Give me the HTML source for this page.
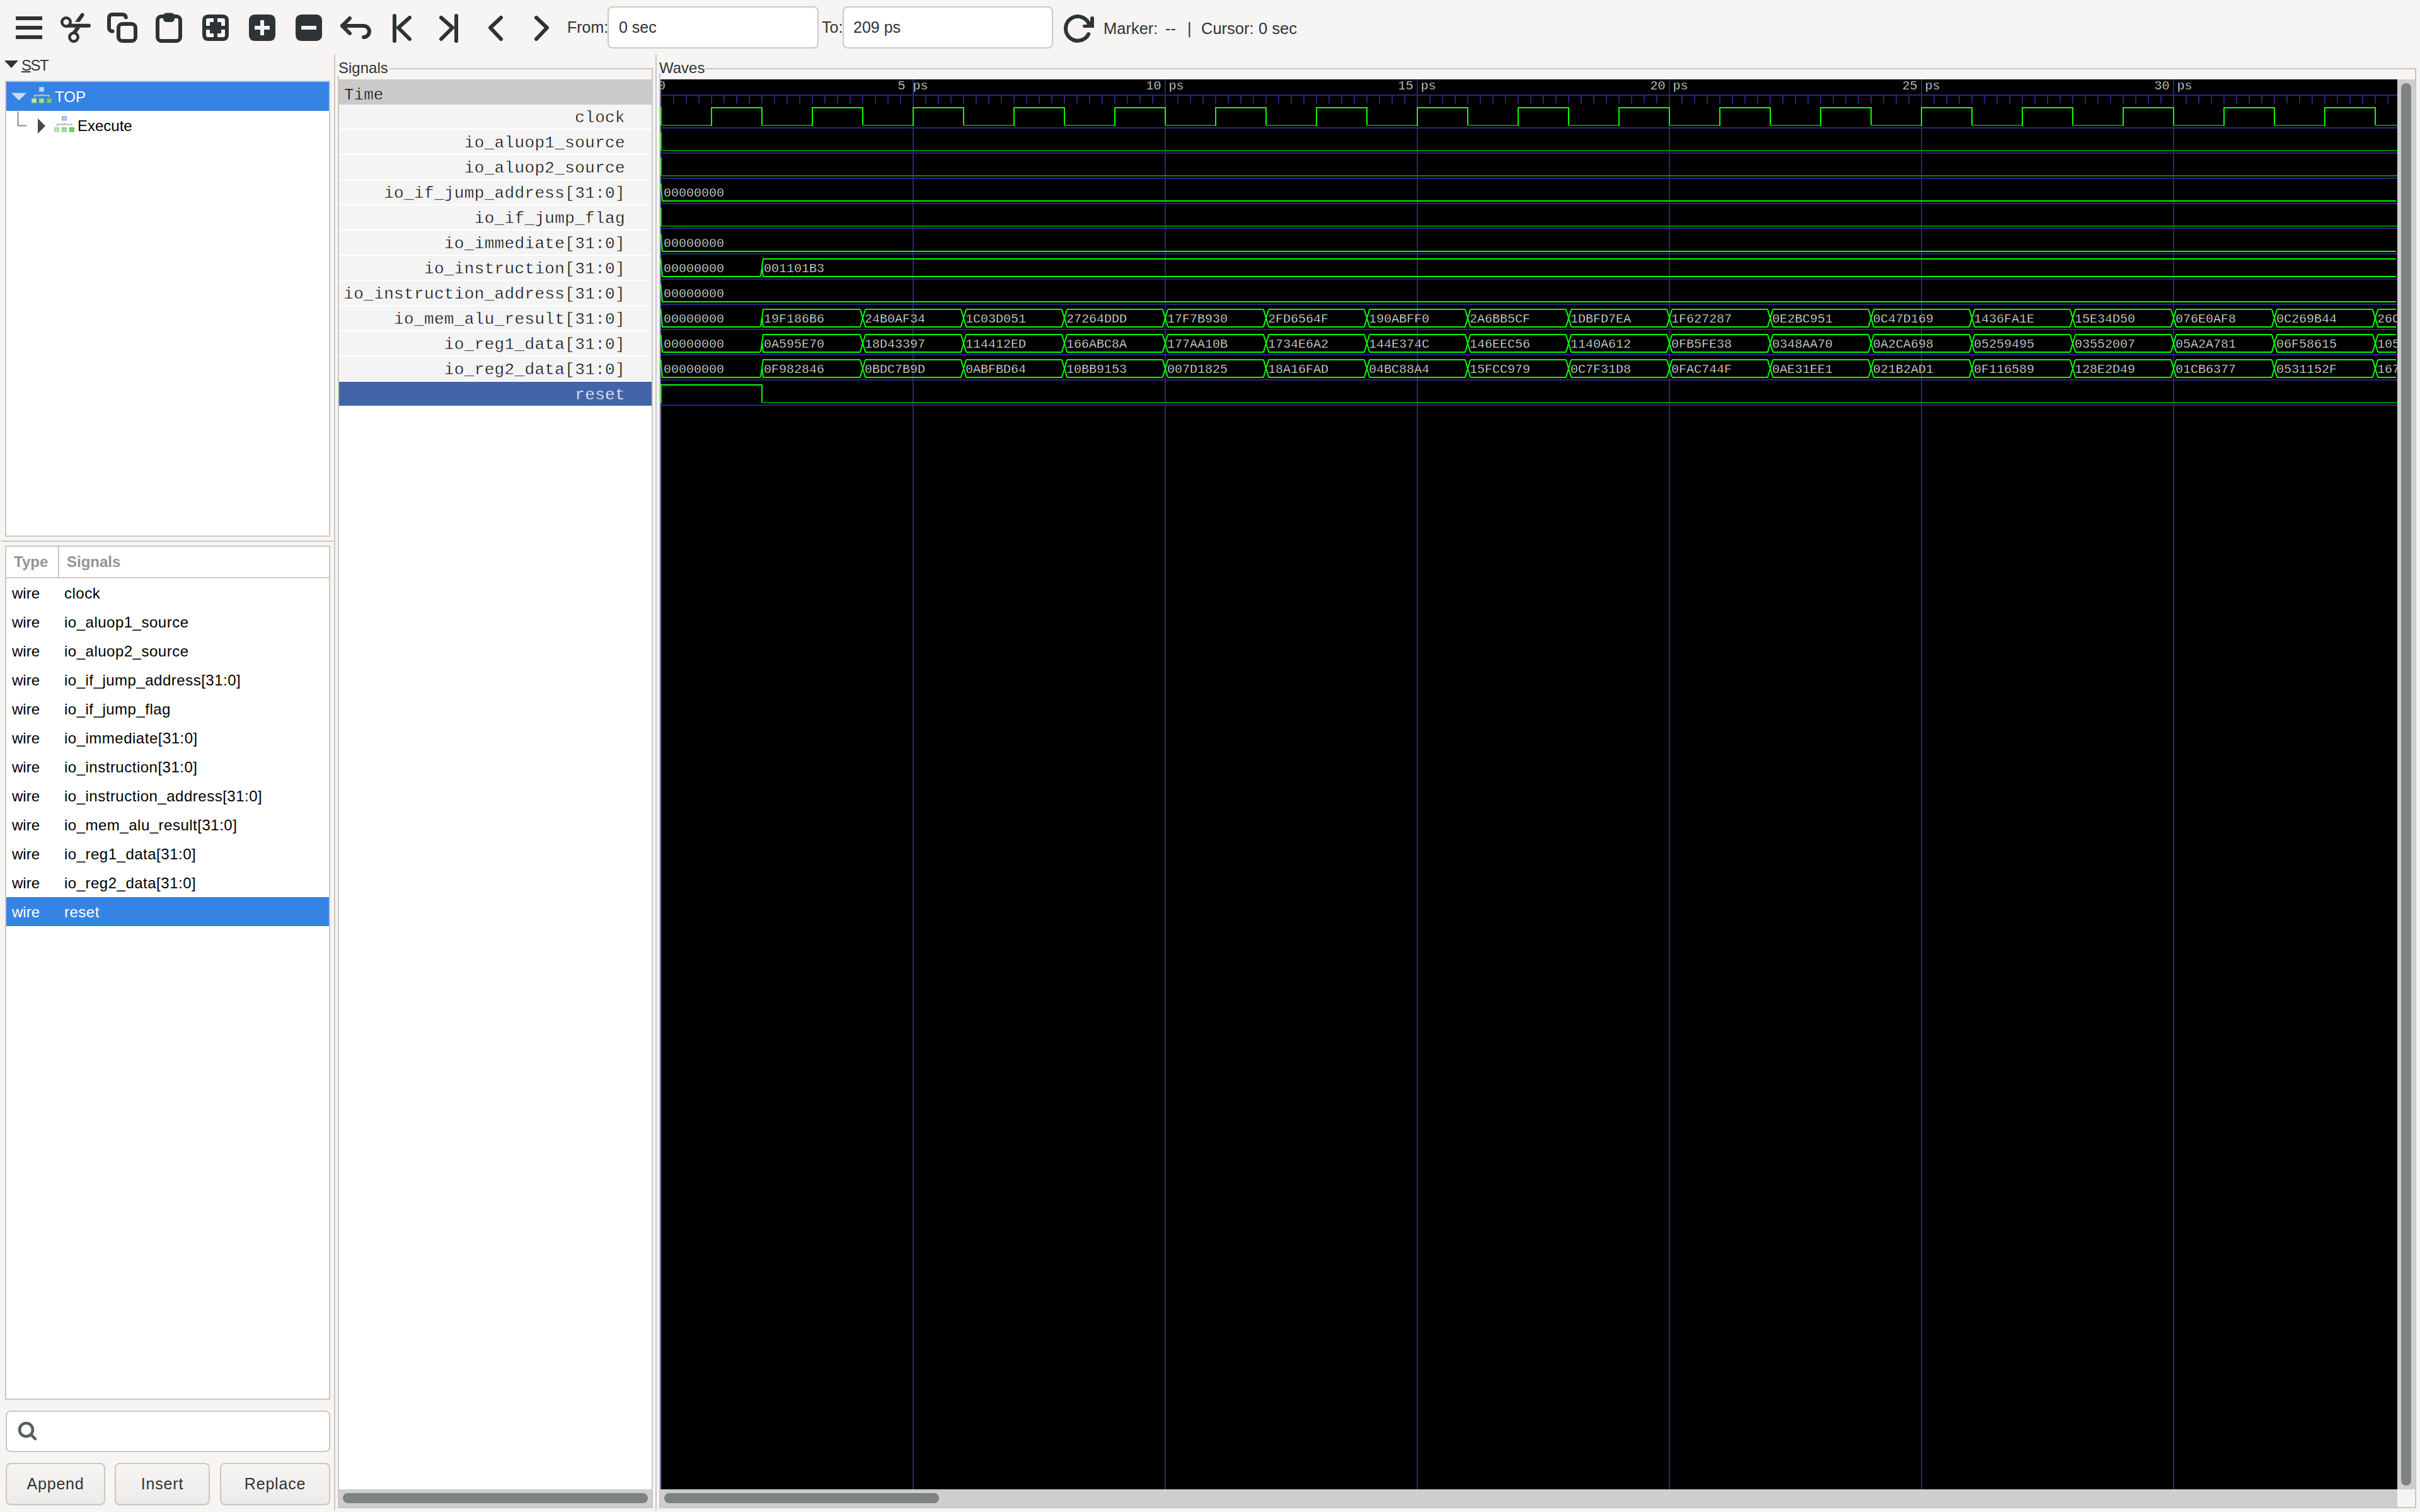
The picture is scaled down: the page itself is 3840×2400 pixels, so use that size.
<!DOCTYPE html><html><head><meta charset="utf-8"><style>
html,body{margin:0;padding:0;}
body{width:3840px;height:2400px;position:relative;overflow:hidden;background:#f6f5f4;font-family:"Liberation Sans", sans-serif;color:#2e3436;}
.abs{position:absolute;}
.t{position:absolute;white-space:pre;line-height:1;}
svg{position:absolute;overflow:visible;}

</style></head><body>
<svg class="abs" style="left:22px;top:20px" width="48" height="48" viewBox="0 0 48 48"><g fill="#2e3436"><rect x="3" y="6" width="42" height="6"/><rect x="3" y="21" width="42" height="6"/><rect x="3" y="36" width="42" height="6"/></g></svg>
<svg class="abs" style="left:96px;top:20px" width="48" height="48" viewBox="0 0 48 48"><g fill="none" stroke="#2e3436" stroke-width="4.5"><circle cx="9" cy="15" r="6.7"/><circle cx="21" cy="39" r="6.7"/></g><path d="M14 17.8 H45 A3 3 0 0 1 45 23.8 H9 Z" fill="#2e3436"/><path d="M17 33.5 L24 23.5 L31.5 23.5 L24.5 33.5 Z" fill="#2e3436"/><path d="M23 14.7 L32 2.2 A3 3 0 0 1 37.2 5.2 L30.5 14.7 Z" fill="#2e3436"/></svg>
<svg class="abs" style="left:170px;top:20px" width="48" height="48" viewBox="0 0 48 48"><g fill="none" stroke="#2e3436" stroke-width="6" stroke-linecap="round" stroke-linejoin="round"><path d="M29.8 7.5 A5 5 0 0 0 24.8 3 H8 A5 5 0 0 0 3 8 V24.6 A5 5 0 0 0 8.5 29.6"/><rect x="18" y="18" width="27" height="27" rx="6"/></g></svg>
<svg class="abs" style="left:244px;top:20px" width="48" height="48" viewBox="0 0 48 48"><g fill="none" stroke="#2e3436" stroke-width="6" stroke-linecap="round" stroke-linejoin="round"><rect x="6" y="6" width="36" height="39" rx="6"/></g><rect x="15" y="0.5" width="18" height="14.5" rx="5" fill="#2e3436"/></svg>
<svg class="abs" style="left:318px;top:20px" width="48" height="48" viewBox="0 0 48 48"><path fill="#2e3436" fill-rule="evenodd" d="M13 3 H35 Q45 3 45 13 V35 Q45 45 35 45 H13 Q3 45 3 35 V13 Q3 3 13 3 Z M12 9 Q9 9 9 12 V21 H15 V15 H21 V9 Z M27 9 V15 H33 V21 H39 V12 Q39 9 36 9 Z M9 27 V36 Q9 39 12 39 H21 V33 H15 V27 Z M33 27 V33 H27 V39 H36 Q39 39 39 36 V27 Z"/></svg>
<svg class="abs" style="left:392px;top:20px" width="48" height="48" viewBox="0 0 48 48"><path fill="#2e3436" fill-rule="evenodd" d="M13 3 H35 Q45 3 45 13 V35 Q45 45 35 45 H13 Q3 45 3 35 V13 Q3 3 13 3 Z M21 12 V21 H12 V27 H21 V36 H27 V27 H36 V21 H27 V12 Z"/></svg>
<svg class="abs" style="left:466px;top:20px" width="48" height="48" viewBox="0 0 48 48"><path fill="#2e3436" fill-rule="evenodd" d="M13 3 H35 Q45 3 45 13 V35 Q45 45 35 45 H13 Q3 45 3 35 V13 Q3 3 13 3 Z M12 21 V27 H36 V21 Z"/></svg>
<svg class="abs" style="left:540px;top:20px" width="48" height="48" viewBox="0 0 48 48"><g fill="none" stroke="#2e3436" stroke-width="6" stroke-linecap="round" stroke-linejoin="round"><path d="M15 9 L3 21 L15 33"/><path d="M3 21 H37 A9 9 0 0 1 37 39"/></g></svg>
<svg class="abs" style="left:614px;top:20px" width="48" height="48" viewBox="0 0 48 48"><g fill="none" stroke="#2e3436" stroke-width="6" stroke-linecap="round" stroke-linejoin="round"><path d="M12 5 V45"/><path d="M36 8 L18 24 L36 42"/></g></svg>
<svg class="abs" style="left:688px;top:20px" width="48" height="48" viewBox="0 0 48 48"><g fill="none" stroke="#2e3436" stroke-width="6" stroke-linecap="round" stroke-linejoin="round"><path d="M36 5 V45"/><path d="M12 8 L30 24 L12 42"/></g></svg>
<svg class="abs" style="left:762px;top:20px" width="48" height="48" viewBox="0 0 48 48"><g fill="none" stroke="#2e3436" stroke-width="6" stroke-linecap="round" stroke-linejoin="round"><path d="M33 8 L16 24 L33 42"/></g></svg>
<svg class="abs" style="left:836px;top:20px" width="48" height="48" viewBox="0 0 48 48"><g fill="none" stroke="#2e3436" stroke-width="6" stroke-linecap="round" stroke-linejoin="round"><path d="M15 8 L32 24 L15 42"/></g></svg>
<svg class="abs" style="left:1686px;top:20px" width="48" height="48" viewBox="0 0 48 48"><g fill="none" stroke="#2e3436" stroke-width="6" stroke-linecap="round" stroke-linejoin="round"><path d="M42.75 20.43 A19.2 19.2 0 1 0 41.31 34.12"/></g><path fill="#2e3436" d="M47 6 Q50 6 50 9 V24 H35 Q32 24 32 21.5 Q32 19 35 19 H44 V9 Q44 6 47 6 Z"/></svg>
<div class="t" style="left:900px;top:31px;font-size:25px;">From:</div>
<div class="abs" style="left:964px;top:10px;width:331px;height:63px;border:2px solid #cdc7c2;border-radius:8px;background:#fff;"></div>
<div class="t" style="left:982px;top:31px;font-size:25px;">0 sec</div>
<div class="t" style="left:1304px;top:31px;font-size:25px;">To:</div>
<div class="abs" style="left:1337px;top:10px;width:330px;height:63px;border:2px solid #cdc7c2;border-radius:8px;background:#fff;"></div>
<div class="t" style="left:1354px;top:31px;font-size:25px;">209 ps</div>
<div class="t" style="left:1751px;top:33px;font-size:25.5px;">Marker:</div>
<div class="t" style="left:1849px;top:33px;font-size:25.5px;">--</div>
<div class="t" style="left:1884px;top:33px;font-size:25.5px;">|</div>
<div class="t" style="left:1906px;top:33px;font-size:25.5px;">Cursor:</div>
<div class="t" style="left:1997px;top:33px;font-size:25.5px;">0 sec</div>
<svg class="abs" style="left:0;top:80px" width="40" height="40"><path d="M7 16 H29 L18 28 Z" fill="#2e3436"/></svg>
<div class="t" style="left:34px;top:92px;font-size:24px;letter-spacing:-1.5px;"><span style="text-decoration:underline;text-underline-offset:1px;">S</span>ST</div>
<div class="abs" style="left:8px;top:128px;width:512px;height:720px;border:2px solid #cdc7c2;background:#fff;"></div>
<div class="abs" style="left:10px;top:130px;width:512px;height:46px;background:#3584e4;"></div>
<svg class="abs" style="left:0;top:130px" width="50" height="46"><path d="M18 17.5 H42 L30 29.5 Z" fill="#c6dcf6"/></svg>
<svg class="abs" style="left:50px;top:138px" width="34" height="28"><rect x="12" y="0" width="8" height="7.5" fill="#b4cff2"/><rect x="14.5" y="2.5" width="3" height="3" fill="#dde6f8"/><path d="M16 11 V13 M5 16 V13.5 H28 V16" stroke="#c9c2b6" stroke-width="2" fill="none"/><rect x="0" y="18" width="8" height="7.6" fill="#a3dc9b"/><rect x="2.5" y="20.5" width="3" height="3" fill="#d4eecf"/><rect x="12" y="18" width="8" height="7.6" fill="#8ed388"/><rect x="14.5" y="20.5" width="3" height="3" fill="#c4e6bf"/><rect x="24" y="18" width="8" height="7.6" fill="#66bd66"/><rect x="26.5" y="20.5" width="3" height="3" fill="#9cd49a"/></svg>
<div class="t" style="left:87px;top:142px;font-size:24px;color:#fff;">TOP</div>
<svg class="abs" style="left:0;top:176px" width="80" height="46"><path d="M28.5 1 V23.5 H42.5" stroke="#8a8a8a" stroke-width="2" fill="none"/><path d="M60 12 L72 24 L60 36 Z" fill="#484848"/></svg>
<svg class="abs" style="left:86px;top:184px" width="34" height="28"><rect x="12" y="0" width="8" height="7.5" fill="#8fbdee"/><rect x="14.5" y="2.5" width="3" height="3" fill="#d6e2f6"/><path d="M16 11 V13 M5 16 V13.5 H28 V16" stroke="#b9b9b9" stroke-width="2" fill="none"/><rect x="0" y="18" width="8" height="7.6" fill="#a3dc9b"/><rect x="2.5" y="20.5" width="3" height="3" fill="#d4eecf"/><rect x="12" y="18" width="8" height="7.6" fill="#8ed388"/><rect x="14.5" y="20.5" width="3" height="3" fill="#c4e6bf"/><rect x="24" y="18" width="8" height="7.6" fill="#66bd66"/><rect x="26.5" y="20.5" width="3" height="3" fill="#9cd49a"/></svg>
<div class="t" style="left:123px;top:188px;font-size:24px;color:#000;">Execute</div>
<div class="abs" style="left:2px;top:858px;width:528px;height:2px;background:#cdc7c2;"></div>
<div class="abs" style="left:8px;top:866px;width:512px;height:1352px;border:2px solid #cdc7c2;background:#fff;"></div>
<div class="abs" style="left:10px;top:916px;width:512px;height:2px;background:#cdc7c2;"></div>
<div class="abs" style="left:92px;top:868px;width:2px;height:48px;background:#cdc7c2;"></div>
<div class="t" style="left:22px;top:880px;font-size:24px;font-weight:bold;color:#929595;">Type</div>
<div class="t" style="left:106px;top:880px;font-size:24px;font-weight:bold;color:#929595;">Signals</div>
<div class="t" style="left:19px;top:930px;font-size:24px;color:#000;">wire</div>
<div class="t" style="left:102px;top:930px;font-size:24px;letter-spacing:0.5px;color:#000;">clock</div>
<div class="t" style="left:19px;top:976px;font-size:24px;color:#000;">wire</div>
<div class="t" style="left:102px;top:976px;font-size:24px;letter-spacing:0.5px;color:#000;">io_aluop1_source</div>
<div class="t" style="left:19px;top:1022px;font-size:24px;color:#000;">wire</div>
<div class="t" style="left:102px;top:1022px;font-size:24px;letter-spacing:0.5px;color:#000;">io_aluop2_source</div>
<div class="t" style="left:19px;top:1068px;font-size:24px;color:#000;">wire</div>
<div class="t" style="left:102px;top:1068px;font-size:24px;letter-spacing:0.5px;color:#000;">io_if_jump_address[31:0]</div>
<div class="t" style="left:19px;top:1114px;font-size:24px;color:#000;">wire</div>
<div class="t" style="left:102px;top:1114px;font-size:24px;letter-spacing:0.5px;color:#000;">io_if_jump_flag</div>
<div class="t" style="left:19px;top:1160px;font-size:24px;color:#000;">wire</div>
<div class="t" style="left:102px;top:1160px;font-size:24px;letter-spacing:0.5px;color:#000;">io_immediate[31:0]</div>
<div class="t" style="left:19px;top:1206px;font-size:24px;color:#000;">wire</div>
<div class="t" style="left:102px;top:1206px;font-size:24px;letter-spacing:0.5px;color:#000;">io_instruction[31:0]</div>
<div class="t" style="left:19px;top:1252px;font-size:24px;color:#000;">wire</div>
<div class="t" style="left:102px;top:1252px;font-size:24px;letter-spacing:0.5px;color:#000;">io_instruction_address[31:0]</div>
<div class="t" style="left:19px;top:1298px;font-size:24px;color:#000;">wire</div>
<div class="t" style="left:102px;top:1298px;font-size:24px;letter-spacing:0.5px;color:#000;">io_mem_alu_result[31:0]</div>
<div class="t" style="left:19px;top:1344px;font-size:24px;color:#000;">wire</div>
<div class="t" style="left:102px;top:1344px;font-size:24px;letter-spacing:0.5px;color:#000;">io_reg1_data[31:0]</div>
<div class="t" style="left:19px;top:1390px;font-size:24px;color:#000;">wire</div>
<div class="t" style="left:102px;top:1390px;font-size:24px;letter-spacing:0.5px;color:#000;">io_reg2_data[31:0]</div>
<div class="abs" style="left:10px;top:1424px;width:512px;height:46px;background:#3584e4;"></div>
<div class="t" style="left:19px;top:1436px;font-size:24px;color:#fff;">wire</div>
<div class="t" style="left:102px;top:1436px;font-size:24px;letter-spacing:0.5px;color:#fff;">reset</div>
<div class="abs" style="left:9px;top:2239px;width:511px;height:62px;border:2px solid #cdc7c2;border-radius:8px;background:#fff;"></div>
<svg class="abs" style="left:20px;top:2250px" width="48" height="48"><circle cx="21.5" cy="19.5" r="10.5" stroke="#555d60" stroke-width="4.5" fill="none"/><path d="M29 27 L36 34" stroke="#555d60" stroke-width="4.5" stroke-linecap="round"/></svg>
<div class="abs" style="left:9px;top:2322px;width:154px;height:63px;border:2px solid #cdc7c2;border-radius:8px;background:linear-gradient(#f6f5f4,#edebe9);box-shadow:0 1px 1px rgba(0,0,0,0.07);"></div>
<div class="t" style="left:9px;top:2343px;width:158px;text-align:center;font-size:25px;letter-spacing:0.8px;">Append</div>
<div class="abs" style="left:182px;top:2322px;width:147px;height:63px;border:2px solid #cdc7c2;border-radius:8px;background:linear-gradient(#f6f5f4,#edebe9);box-shadow:0 1px 1px rgba(0,0,0,0.07);"></div>
<div class="t" style="left:182px;top:2343px;width:151px;text-align:center;font-size:25px;letter-spacing:0.8px;">Insert</div>
<div class="abs" style="left:349px;top:2322px;width:171px;height:63px;border:2px solid #cdc7c2;border-radius:8px;background:linear-gradient(#f6f5f4,#edebe9);box-shadow:0 1px 1px rgba(0,0,0,0.07);"></div>
<div class="t" style="left:349px;top:2343px;width:175px;text-align:center;font-size:25px;letter-spacing:0.8px;">Replace</div>
<div class="abs" style="left:530px;top:86px;width:2px;height:2311px;background:#cdc7c2;"></div>
<div class="t" style="left:537px;top:96px;font-size:24px;">Signals</div>
<div class="abs" style="left:618px;top:108px;width:418px;height:2px;background:#cdc7c2;"></div>
<div class="abs" style="left:1034px;top:108px;width:2px;height:2286px;background:#cdc7c2;"></div>
<div class="abs" style="left:536px;top:120px;width:2px;height:2274px;background:#cdc7c2;"></div>
<div class="abs" style="left:536px;top:2392px;width:500px;height:2px;background:#cdc7c2;"></div>
<div class="abs" style="left:538px;top:126px;width:496px;height:2238px;background:#fff;"></div>
<div class="abs" style="left:538px;top:126px;width:496px;height:40px;background:#cacaca;"></div>
<div class="t" style="left:546px;top:138px;font-size:26px;font-family:'Liberation Mono', monospace;color:#000;-webkit-text-stroke:0.6px #cacaca;">Time</div>
<div class="abs" style="left:538px;top:166px;width:496px;height:38px;background:#f4f4f4;"></div>
<div class="t" style="left:538px;width:454px;text-align:right;top:174px;font-size:26px;letter-spacing:0.35px;font-family:'Liberation Mono', monospace;color:#000;-webkit-text-stroke:0.5px #f4f4f4;">clock</div>
<div class="abs" style="left:538px;top:206px;width:496px;height:38px;background:#f4f4f4;"></div>
<div class="t" style="left:538px;width:454px;text-align:right;top:214px;font-size:26px;letter-spacing:0.35px;font-family:'Liberation Mono', monospace;color:#000;-webkit-text-stroke:0.5px #f4f4f4;">io_aluop1_source</div>
<div class="abs" style="left:538px;top:246px;width:496px;height:38px;background:#f4f4f4;"></div>
<div class="t" style="left:538px;width:454px;text-align:right;top:254px;font-size:26px;letter-spacing:0.35px;font-family:'Liberation Mono', monospace;color:#000;-webkit-text-stroke:0.5px #f4f4f4;">io_aluop2_source</div>
<div class="abs" style="left:538px;top:286px;width:496px;height:38px;background:#f4f4f4;"></div>
<div class="t" style="left:538px;width:454px;text-align:right;top:294px;font-size:26px;letter-spacing:0.35px;font-family:'Liberation Mono', monospace;color:#000;-webkit-text-stroke:0.5px #f4f4f4;">io_if_jump_address[31:0]</div>
<div class="abs" style="left:538px;top:326px;width:496px;height:38px;background:#f4f4f4;"></div>
<div class="t" style="left:538px;width:454px;text-align:right;top:334px;font-size:26px;letter-spacing:0.35px;font-family:'Liberation Mono', monospace;color:#000;-webkit-text-stroke:0.5px #f4f4f4;">io_if_jump_flag</div>
<div class="abs" style="left:538px;top:366px;width:496px;height:38px;background:#f4f4f4;"></div>
<div class="t" style="left:538px;width:454px;text-align:right;top:374px;font-size:26px;letter-spacing:0.35px;font-family:'Liberation Mono', monospace;color:#000;-webkit-text-stroke:0.5px #f4f4f4;">io_immediate[31:0]</div>
<div class="abs" style="left:538px;top:406px;width:496px;height:38px;background:#f4f4f4;"></div>
<div class="t" style="left:538px;width:454px;text-align:right;top:414px;font-size:26px;letter-spacing:0.35px;font-family:'Liberation Mono', monospace;color:#000;-webkit-text-stroke:0.5px #f4f4f4;">io_instruction[31:0]</div>
<div class="abs" style="left:538px;top:446px;width:496px;height:38px;background:#f4f4f4;"></div>
<div class="t" style="left:538px;width:454px;text-align:right;top:454px;font-size:26px;letter-spacing:0.35px;font-family:'Liberation Mono', monospace;color:#000;-webkit-text-stroke:0.5px #f4f4f4;">io_instruction_address[31:0]</div>
<div class="abs" style="left:538px;top:486px;width:496px;height:38px;background:#f4f4f4;"></div>
<div class="t" style="left:538px;width:454px;text-align:right;top:494px;font-size:26px;letter-spacing:0.35px;font-family:'Liberation Mono', monospace;color:#000;-webkit-text-stroke:0.5px #f4f4f4;">io_mem_alu_result[31:0]</div>
<div class="abs" style="left:538px;top:526px;width:496px;height:38px;background:#f4f4f4;"></div>
<div class="t" style="left:538px;width:454px;text-align:right;top:534px;font-size:26px;letter-spacing:0.35px;font-family:'Liberation Mono', monospace;color:#000;-webkit-text-stroke:0.5px #f4f4f4;">io_reg1_data[31:0]</div>
<div class="abs" style="left:538px;top:566px;width:496px;height:38px;background:#f4f4f4;"></div>
<div class="t" style="left:538px;width:454px;text-align:right;top:574px;font-size:26px;letter-spacing:0.35px;font-family:'Liberation Mono', monospace;color:#000;-webkit-text-stroke:0.5px #f4f4f4;">io_reg2_data[31:0]</div>
<div class="abs" style="left:538px;top:606px;width:496px;height:38px;background:#4464aa;"></div>
<div class="t" style="left:538px;width:454px;text-align:right;top:614px;font-size:26px;letter-spacing:0.35px;font-family:'Liberation Mono', monospace;color:#fff;-webkit-text-stroke:0.5px #4464aa;">reset</div>
<div class="abs" style="left:538px;top:2364px;width:496px;height:28px;background:#cecece;"></div>
<div class="abs" style="left:544px;top:2370px;width:484px;height:16px;border-radius:8px;background:#7e8283;"></div>
<div class="abs" style="left:1040px;top:86px;width:2px;height:2311px;background:#cdc7c2;"></div>
<div class="t" style="left:1046px;top:96px;font-size:24px;">Waves</div>
<div class="abs" style="left:1118px;top:108px;width:2716px;height:2px;background:#cdc7c2;"></div>
<div class="abs" style="left:1046px;top:116px;width:2px;height:2278px;background:#cdc7c2;"></div>
<div class="abs" style="left:3832px;top:108px;width:2px;height:2286px;background:#cdc7c2;"></div>
<div class="abs" style="left:1046px;top:2392px;width:2788px;height:2px;background:#cdc7c2;"></div>
<div class="abs" style="left:3804px;top:126px;width:28px;height:2238px;background:#cecece;"></div>
<div class="abs" style="left:3810px;top:132px;width:16px;height:2226px;border-radius:8px;background:#7e8283;"></div>
<div class="abs" style="left:1048px;top:2364px;width:2756px;height:28px;background:#cecece;"></div>
<div class="abs" style="left:1054px;top:2370px;width:436px;height:16px;border-radius:8px;background:#7e8283;"></div>
<div class="abs" style="left:3804px;top:2364px;width:28px;height:28px;background:#f6f5f4;"></div>
<svg style="left:1048px;top:126px" width="2756" height="2238" viewBox="0 0 2756 2238" font-family='"Liberation Mono", monospace'><defs><clipPath id="cc"><rect x="0" y="0" width="2756" height="2238"/></clipPath></defs><g clip-path="url(#cc)" shape-rendering="crispEdges"><rect x="0" y="0" width="2756" height="2238" fill="#000"/><rect x="0" y="24" width="2756" height="2" fill="#262680"/><rect x="0" y="26" width="2" height="12" fill="#262680"/><rect x="20" y="26" width="2" height="12" fill="#262680"/><rect x="40" y="26" width="2" height="12" fill="#262680"/><rect x="60" y="26" width="2" height="12" fill="#262680"/><rect x="80" y="26" width="2" height="12" fill="#262680"/><rect x="100" y="26" width="2" height="12" fill="#262680"/><rect x="120" y="26" width="2" height="12" fill="#262680"/><rect x="140" y="26" width="2" height="12" fill="#262680"/><rect x="160" y="26" width="2" height="12" fill="#262680"/><rect x="180" y="26" width="2" height="12" fill="#262680"/><rect x="200" y="26" width="2" height="12" fill="#262680"/><rect x="220" y="26" width="2" height="12" fill="#262680"/><rect x="240" y="26" width="2" height="12" fill="#262680"/><rect x="260" y="26" width="2" height="12" fill="#262680"/><rect x="280" y="26" width="2" height="12" fill="#262680"/><rect x="300" y="26" width="2" height="12" fill="#262680"/><rect x="320" y="26" width="2" height="12" fill="#262680"/><rect x="340" y="26" width="2" height="12" fill="#262680"/><rect x="360" y="26" width="2" height="12" fill="#262680"/><rect x="380" y="26" width="2" height="12" fill="#262680"/><rect x="400" y="26" width="2" height="12" fill="#262680"/><rect x="420" y="26" width="2" height="12" fill="#262680"/><rect x="440" y="26" width="2" height="12" fill="#262680"/><rect x="460" y="26" width="2" height="12" fill="#262680"/><rect x="480" y="26" width="2" height="12" fill="#262680"/><rect x="500" y="26" width="2" height="12" fill="#262680"/><rect x="520" y="26" width="2" height="12" fill="#262680"/><rect x="540" y="26" width="2" height="12" fill="#262680"/><rect x="560" y="26" width="2" height="12" fill="#262680"/><rect x="580" y="26" width="2" height="12" fill="#262680"/><rect x="600" y="26" width="2" height="12" fill="#262680"/><rect x="620" y="26" width="2" height="12" fill="#262680"/><rect x="640" y="26" width="2" height="12" fill="#262680"/><rect x="660" y="26" width="2" height="12" fill="#262680"/><rect x="680" y="26" width="2" height="12" fill="#262680"/><rect x="700" y="26" width="2" height="12" fill="#262680"/><rect x="720" y="26" width="2" height="12" fill="#262680"/><rect x="740" y="26" width="2" height="12" fill="#262680"/><rect x="760" y="26" width="2" height="12" fill="#262680"/><rect x="780" y="26" width="2" height="12" fill="#262680"/><rect x="800" y="26" width="2" height="12" fill="#262680"/><rect x="820" y="26" width="2" height="12" fill="#262680"/><rect x="840" y="26" width="2" height="12" fill="#262680"/><rect x="860" y="26" width="2" height="12" fill="#262680"/><rect x="880" y="26" width="2" height="12" fill="#262680"/><rect x="900" y="26" width="2" height="12" fill="#262680"/><rect x="920" y="26" width="2" height="12" fill="#262680"/><rect x="940" y="26" width="2" height="12" fill="#262680"/><rect x="960" y="26" width="2" height="12" fill="#262680"/><rect x="980" y="26" width="2" height="12" fill="#262680"/><rect x="1000" y="26" width="2" height="12" fill="#262680"/><rect x="1020" y="26" width="2" height="12" fill="#262680"/><rect x="1040" y="26" width="2" height="12" fill="#262680"/><rect x="1060" y="26" width="2" height="12" fill="#262680"/><rect x="1080" y="26" width="2" height="12" fill="#262680"/><rect x="1100" y="26" width="2" height="12" fill="#262680"/><rect x="1120" y="26" width="2" height="12" fill="#262680"/><rect x="1140" y="26" width="2" height="12" fill="#262680"/><rect x="1160" y="26" width="2" height="12" fill="#262680"/><rect x="1180" y="26" width="2" height="12" fill="#262680"/><rect x="1200" y="26" width="2" height="12" fill="#262680"/><rect x="1220" y="26" width="2" height="12" fill="#262680"/><rect x="1240" y="26" width="2" height="12" fill="#262680"/><rect x="1260" y="26" width="2" height="12" fill="#262680"/><rect x="1280" y="26" width="2" height="12" fill="#262680"/><rect x="1300" y="26" width="2" height="12" fill="#262680"/><rect x="1320" y="26" width="2" height="12" fill="#262680"/><rect x="1340" y="26" width="2" height="12" fill="#262680"/><rect x="1360" y="26" width="2" height="12" fill="#262680"/><rect x="1380" y="26" width="2" height="12" fill="#262680"/><rect x="1400" y="26" width="2" height="12" fill="#262680"/><rect x="1420" y="26" width="2" height="12" fill="#262680"/><rect x="1440" y="26" width="2" height="12" fill="#262680"/><rect x="1460" y="26" width="2" height="12" fill="#262680"/><rect x="1480" y="26" width="2" height="12" fill="#262680"/><rect x="1500" y="26" width="2" height="12" fill="#262680"/><rect x="1520" y="26" width="2" height="12" fill="#262680"/><rect x="1540" y="26" width="2" height="12" fill="#262680"/><rect x="1560" y="26" width="2" height="12" fill="#262680"/><rect x="1580" y="26" width="2" height="12" fill="#262680"/><rect x="1600" y="26" width="2" height="12" fill="#262680"/><rect x="1620" y="26" width="2" height="12" fill="#262680"/><rect x="1640" y="26" width="2" height="12" fill="#262680"/><rect x="1660" y="26" width="2" height="12" fill="#262680"/><rect x="1680" y="26" width="2" height="12" fill="#262680"/><rect x="1700" y="26" width="2" height="12" fill="#262680"/><rect x="1720" y="26" width="2" height="12" fill="#262680"/><rect x="1740" y="26" width="2" height="12" fill="#262680"/><rect x="1760" y="26" width="2" height="12" fill="#262680"/><rect x="1780" y="26" width="2" height="12" fill="#262680"/><rect x="1800" y="26" width="2" height="12" fill="#262680"/><rect x="1820" y="26" width="2" height="12" fill="#262680"/><rect x="1840" y="26" width="2" height="12" fill="#262680"/><rect x="1860" y="26" width="2" height="12" fill="#262680"/><rect x="1880" y="26" width="2" height="12" fill="#262680"/><rect x="1900" y="26" width="2" height="12" fill="#262680"/><rect x="1920" y="26" width="2" height="12" fill="#262680"/><rect x="1940" y="26" width="2" height="12" fill="#262680"/><rect x="1960" y="26" width="2" height="12" fill="#262680"/><rect x="1980" y="26" width="2" height="12" fill="#262680"/><rect x="2000" y="26" width="2" height="12" fill="#262680"/><rect x="2020" y="26" width="2" height="12" fill="#262680"/><rect x="2040" y="26" width="2" height="12" fill="#262680"/><rect x="2060" y="26" width="2" height="12" fill="#262680"/><rect x="2080" y="26" width="2" height="12" fill="#262680"/><rect x="2100" y="26" width="2" height="12" fill="#262680"/><rect x="2120" y="26" width="2" height="12" fill="#262680"/><rect x="2140" y="26" width="2" height="12" fill="#262680"/><rect x="2160" y="26" width="2" height="12" fill="#262680"/><rect x="2180" y="26" width="2" height="12" fill="#262680"/><rect x="2200" y="26" width="2" height="12" fill="#262680"/><rect x="2220" y="26" width="2" height="12" fill="#262680"/><rect x="2240" y="26" width="2" height="12" fill="#262680"/><rect x="2260" y="26" width="2" height="12" fill="#262680"/><rect x="2280" y="26" width="2" height="12" fill="#262680"/><rect x="2300" y="26" width="2" height="12" fill="#262680"/><rect x="2320" y="26" width="2" height="12" fill="#262680"/><rect x="2340" y="26" width="2" height="12" fill="#262680"/><rect x="2360" y="26" width="2" height="12" fill="#262680"/><rect x="2380" y="26" width="2" height="12" fill="#262680"/><rect x="2400" y="26" width="2" height="12" fill="#262680"/><rect x="2420" y="26" width="2" height="12" fill="#262680"/><rect x="2440" y="26" width="2" height="12" fill="#262680"/><rect x="2460" y="26" width="2" height="12" fill="#262680"/><rect x="2480" y="26" width="2" height="12" fill="#262680"/><rect x="2500" y="26" width="2" height="12" fill="#262680"/><rect x="2520" y="26" width="2" height="12" fill="#262680"/><rect x="2540" y="26" width="2" height="12" fill="#262680"/><rect x="2560" y="26" width="2" height="12" fill="#262680"/><rect x="2580" y="26" width="2" height="12" fill="#262680"/><rect x="2600" y="26" width="2" height="12" fill="#262680"/><rect x="2620" y="26" width="2" height="12" fill="#262680"/><rect x="2640" y="26" width="2" height="12" fill="#262680"/><rect x="2660" y="26" width="2" height="12" fill="#262680"/><rect x="2680" y="26" width="2" height="12" fill="#262680"/><rect x="2700" y="26" width="2" height="12" fill="#262680"/><rect x="2720" y="26" width="2" height="12" fill="#262680"/><rect x="2740" y="26" width="2" height="12" fill="#262680"/><rect x="0" y="0" width="2" height="2238" fill="#262680"/><rect x="400" y="0" width="2" height="2238" fill="#262680"/><rect x="800" y="0" width="2" height="2238" fill="#262680"/><rect x="1200" y="0" width="2" height="2238" fill="#262680"/><rect x="1600" y="0" width="2" height="2238" fill="#262680"/><rect x="2000" y="0" width="2" height="2238" fill="#262680"/><rect x="2400" y="0" width="2" height="2238" fill="#262680"/><text x="-4" y="16" fill="#ffffff" font-size="20" stroke="#000" stroke-width="0.5">0</text><text x="376.5" y="16" fill="#ffffff" font-size="20" stroke="#000" stroke-width="0.5">5 ps</text><text x="770.5" y="16" fill="#ffffff" font-size="20" stroke="#000" stroke-width="0.5">10 ps</text><text x="1170.5" y="16" fill="#ffffff" font-size="20" stroke="#000" stroke-width="0.5">15 ps</text><text x="1570.5" y="16" fill="#ffffff" font-size="20" stroke="#000" stroke-width="0.5">20 ps</text><text x="1970.5" y="16" fill="#ffffff" font-size="20" stroke="#000" stroke-width="0.5">25 ps</text><text x="2370.5" y="16" fill="#ffffff" font-size="20" stroke="#000" stroke-width="0.5">30 ps</text><rect x="0" y="76" width="2756" height="2" fill="#262680"/><rect x="0" y="116" width="2756" height="2" fill="#262680"/><rect x="0" y="156" width="2756" height="2" fill="#262680"/><rect x="0" y="196" width="2756" height="2" fill="#262680"/><rect x="0" y="236" width="2756" height="2" fill="#262680"/><rect x="0" y="276" width="2756" height="2" fill="#262680"/><rect x="0" y="316" width="2756" height="2" fill="#262680"/><rect x="0" y="356" width="2756" height="2" fill="#262680"/><rect x="0" y="396" width="2756" height="2" fill="#262680"/><rect x="0" y="436" width="2756" height="2" fill="#262680"/><rect x="0" y="476" width="2756" height="2" fill="#262680"/><rect x="0" y="516" width="2756" height="2" fill="#262680"/><rect x="0" y="44" width="2" height="30" fill="#00d800"/><rect x="0" y="72" width="80" height="2" fill="#008a00"/><rect x="80" y="44" width="2" height="30" fill="#00ff00"/><rect x="80" y="44" width="80" height="2" fill="#00ff00"/><rect x="160" y="44" width="2" height="30" fill="#00ff00"/><rect x="160" y="72" width="80" height="2" fill="#008a00"/><rect x="240" y="44" width="2" height="30" fill="#00ff00"/><rect x="240" y="44" width="80" height="2" fill="#00ff00"/><rect x="320" y="44" width="2" height="30" fill="#00ff00"/><rect x="320" y="72" width="80" height="2" fill="#008a00"/><rect x="400" y="44" width="2" height="30" fill="#00ff00"/><rect x="400" y="44" width="80" height="2" fill="#00ff00"/><rect x="480" y="44" width="2" height="30" fill="#00ff00"/><rect x="480" y="72" width="80" height="2" fill="#008a00"/><rect x="560" y="44" width="2" height="30" fill="#00ff00"/><rect x="560" y="44" width="80" height="2" fill="#00ff00"/><rect x="640" y="44" width="2" height="30" fill="#00ff00"/><rect x="640" y="72" width="80" height="2" fill="#008a00"/><rect x="720" y="44" width="2" height="30" fill="#00ff00"/><rect x="720" y="44" width="80" height="2" fill="#00ff00"/><rect x="800" y="44" width="2" height="30" fill="#00ff00"/><rect x="800" y="72" width="80" height="2" fill="#008a00"/><rect x="880" y="44" width="2" height="30" fill="#00ff00"/><rect x="880" y="44" width="80" height="2" fill="#00ff00"/><rect x="960" y="44" width="2" height="30" fill="#00ff00"/><rect x="960" y="72" width="80" height="2" fill="#008a00"/><rect x="1040" y="44" width="2" height="30" fill="#00ff00"/><rect x="1040" y="44" width="80" height="2" fill="#00ff00"/><rect x="1120" y="44" width="2" height="30" fill="#00ff00"/><rect x="1120" y="72" width="80" height="2" fill="#008a00"/><rect x="1200" y="44" width="2" height="30" fill="#00ff00"/><rect x="1200" y="44" width="80" height="2" fill="#00ff00"/><rect x="1280" y="44" width="2" height="30" fill="#00ff00"/><rect x="1280" y="72" width="80" height="2" fill="#008a00"/><rect x="1360" y="44" width="2" height="30" fill="#00ff00"/><rect x="1360" y="44" width="80" height="2" fill="#00ff00"/><rect x="1440" y="44" width="2" height="30" fill="#00ff00"/><rect x="1440" y="72" width="80" height="2" fill="#008a00"/><rect x="1520" y="44" width="2" height="30" fill="#00ff00"/><rect x="1520" y="44" width="80" height="2" fill="#00ff00"/><rect x="1600" y="44" width="2" height="30" fill="#00ff00"/><rect x="1600" y="72" width="80" height="2" fill="#008a00"/><rect x="1680" y="44" width="2" height="30" fill="#00ff00"/><rect x="1680" y="44" width="80" height="2" fill="#00ff00"/><rect x="1760" y="44" width="2" height="30" fill="#00ff00"/><rect x="1760" y="72" width="80" height="2" fill="#008a00"/><rect x="1840" y="44" width="2" height="30" fill="#00ff00"/><rect x="1840" y="44" width="80" height="2" fill="#00ff00"/><rect x="1920" y="44" width="2" height="30" fill="#00ff00"/><rect x="1920" y="72" width="80" height="2" fill="#008a00"/><rect x="2000" y="44" width="2" height="30" fill="#00ff00"/><rect x="2000" y="44" width="80" height="2" fill="#00ff00"/><rect x="2080" y="44" width="2" height="30" fill="#00ff00"/><rect x="2080" y="72" width="80" height="2" fill="#008a00"/><rect x="2160" y="44" width="2" height="30" fill="#00ff00"/><rect x="2160" y="44" width="80" height="2" fill="#00ff00"/><rect x="2240" y="44" width="2" height="30" fill="#00ff00"/><rect x="2240" y="72" width="80" height="2" fill="#008a00"/><rect x="2320" y="44" width="2" height="30" fill="#00ff00"/><rect x="2320" y="44" width="80" height="2" fill="#00ff00"/><rect x="2400" y="44" width="2" height="30" fill="#00ff00"/><rect x="2400" y="72" width="80" height="2" fill="#008a00"/><rect x="2480" y="44" width="2" height="30" fill="#00ff00"/><rect x="2480" y="44" width="80" height="2" fill="#00ff00"/><rect x="2560" y="44" width="2" height="30" fill="#00ff00"/><rect x="2560" y="72" width="80" height="2" fill="#008a00"/><rect x="2640" y="44" width="2" height="30" fill="#00ff00"/><rect x="2640" y="44" width="80" height="2" fill="#00ff00"/><rect x="2720" y="44" width="2" height="30" fill="#00ff00"/><rect x="2720" y="72" width="36" height="2" fill="#008a00"/><rect x="0" y="84" width="2" height="30" fill="#00d800"/><rect x="0" y="112" width="2756" height="2" fill="#008a00"/><rect x="0" y="124" width="2" height="30" fill="#00d800"/><rect x="0" y="152" width="2756" height="2" fill="#008a00"/><rect x="0" y="204" width="2" height="30" fill="#00d800"/><rect x="0" y="232" width="2756" height="2" fill="#008a00"/><rect x="0" y="484" width="2" height="30" fill="#00d800"/><rect x="0" y="484" width="160" height="2" fill="#00ff00"/><rect x="160" y="484" width="2" height="30" fill="#00ff00"/><rect x="160" y="512" width="2596" height="2" fill="#008a00"/><line x1="0.5" y1="165" x2="3" y2="193" stroke="#00ff00" stroke-width="2" shape-rendering="geometricPrecision"/><rect x="3" y="192" width="2751" height="2" fill="#00ff00"/><text x="5" y="186" fill="#ffffff" font-size="20" stroke="#000" stroke-width="0.5">00000000</text><line x1="0.5" y1="245" x2="3" y2="273" stroke="#00ff00" stroke-width="2" shape-rendering="geometricPrecision"/><rect x="3" y="272" width="2751" height="2" fill="#00ff00"/><text x="5" y="266" fill="#ffffff" font-size="20" stroke="#000" stroke-width="0.5">00000000</text><line x1="0.5" y1="285" x2="3" y2="313" stroke="#00ff00" stroke-width="2" shape-rendering="geometricPrecision"/><rect x="3" y="312" width="155" height="2" fill="#00ff00"/><text x="5" y="306" fill="#ffffff" font-size="20" stroke="#000" stroke-width="0.5">00000000</text><line x1="159" y1="313" x2="163" y2="285" stroke="#00ff00" stroke-width="2" shape-rendering="geometricPrecision"/><line x1="161.4" y1="299" x2="163" y2="313" stroke="#00ff00" stroke-width="2" shape-rendering="geometricPrecision"/><rect x="162" y="284" width="2592" height="2" fill="#00ff00"/><rect x="162" y="312" width="2592" height="2" fill="#00ff00"/><text x="164" y="306" fill="#ffffff" font-size="20" stroke="#000" stroke-width="0.5">001101B3</text><line x1="0.5" y1="325" x2="3" y2="353" stroke="#00ff00" stroke-width="2" shape-rendering="geometricPrecision"/><rect x="3" y="352" width="2751" height="2" fill="#00ff00"/><text x="5" y="346" fill="#ffffff" font-size="20" stroke="#000" stroke-width="0.5">00000000</text><line x1="0.5" y1="365" x2="3" y2="393" stroke="#00ff00" stroke-width="2" shape-rendering="geometricPrecision"/><rect x="3" y="392" width="155" height="2" fill="#00ff00"/><text x="5" y="386" fill="#ffffff" font-size="20" stroke="#000" stroke-width="0.5">00000000</text><line x1="159" y1="393" x2="163" y2="365" stroke="#00ff00" stroke-width="2" shape-rendering="geometricPrecision"/><line x1="161.4" y1="379" x2="163" y2="393" stroke="#00ff00" stroke-width="2" shape-rendering="geometricPrecision"/><rect x="162" y="364" width="155" height="2" fill="#00ff00"/><rect x="162" y="392" width="155" height="2" fill="#00ff00"/><text x="164" y="386" fill="#ffffff" font-size="20" stroke="#000" stroke-width="0.5">19F186B6</text><line x1="316.8" y1="365" x2="325.2" y2="393" stroke="#00ff00" stroke-width="2" shape-rendering="geometricPrecision"/><line x1="316.8" y1="393" x2="325.2" y2="365" stroke="#00ff00" stroke-width="2" shape-rendering="geometricPrecision"/><rect x="325" y="364" width="152" height="2" fill="#00ff00"/><rect x="325" y="392" width="152" height="2" fill="#00ff00"/><text x="324" y="386" fill="#ffffff" font-size="20" stroke="#000" stroke-width="0.5">24B0AF34</text><line x1="476.8" y1="365" x2="485.2" y2="393" stroke="#00ff00" stroke-width="2" shape-rendering="geometricPrecision"/><line x1="476.8" y1="393" x2="485.2" y2="365" stroke="#00ff00" stroke-width="2" shape-rendering="geometricPrecision"/><rect x="485" y="364" width="152" height="2" fill="#00ff00"/><rect x="485" y="392" width="152" height="2" fill="#00ff00"/><text x="484" y="386" fill="#ffffff" font-size="20" stroke="#000" stroke-width="0.5">1C03D051</text><line x1="636.8" y1="365" x2="645.2" y2="393" stroke="#00ff00" stroke-width="2" shape-rendering="geometricPrecision"/><line x1="636.8" y1="393" x2="645.2" y2="365" stroke="#00ff00" stroke-width="2" shape-rendering="geometricPrecision"/><rect x="645" y="364" width="152" height="2" fill="#00ff00"/><rect x="645" y="392" width="152" height="2" fill="#00ff00"/><text x="644" y="386" fill="#ffffff" font-size="20" stroke="#000" stroke-width="0.5">27264DDD</text><line x1="796.8" y1="365" x2="805.2" y2="393" stroke="#00ff00" stroke-width="2" shape-rendering="geometricPrecision"/><line x1="796.8" y1="393" x2="805.2" y2="365" stroke="#00ff00" stroke-width="2" shape-rendering="geometricPrecision"/><rect x="805" y="364" width="152" height="2" fill="#00ff00"/><rect x="805" y="392" width="152" height="2" fill="#00ff00"/><text x="804" y="386" fill="#ffffff" font-size="20" stroke="#000" stroke-width="0.5">17F7B930</text><line x1="956.8" y1="365" x2="965.2" y2="393" stroke="#00ff00" stroke-width="2" shape-rendering="geometricPrecision"/><line x1="956.8" y1="393" x2="965.2" y2="365" stroke="#00ff00" stroke-width="2" shape-rendering="geometricPrecision"/><rect x="965" y="364" width="152" height="2" fill="#00ff00"/><rect x="965" y="392" width="152" height="2" fill="#00ff00"/><text x="964" y="386" fill="#ffffff" font-size="20" stroke="#000" stroke-width="0.5">2FD6564F</text><line x1="1116.8" y1="365" x2="1125.2" y2="393" stroke="#00ff00" stroke-width="2" shape-rendering="geometricPrecision"/><line x1="1116.8" y1="393" x2="1125.2" y2="365" stroke="#00ff00" stroke-width="2" shape-rendering="geometricPrecision"/><rect x="1125" y="364" width="152" height="2" fill="#00ff00"/><rect x="1125" y="392" width="152" height="2" fill="#00ff00"/><text x="1124" y="386" fill="#ffffff" font-size="20" stroke="#000" stroke-width="0.5">190ABFF0</text><line x1="1276.8" y1="365" x2="1285.2" y2="393" stroke="#00ff00" stroke-width="2" shape-rendering="geometricPrecision"/><line x1="1276.8" y1="393" x2="1285.2" y2="365" stroke="#00ff00" stroke-width="2" shape-rendering="geometricPrecision"/><rect x="1285" y="364" width="152" height="2" fill="#00ff00"/><rect x="1285" y="392" width="152" height="2" fill="#00ff00"/><text x="1284" y="386" fill="#ffffff" font-size="20" stroke="#000" stroke-width="0.5">2A6BB5CF</text><line x1="1436.8" y1="365" x2="1445.2" y2="393" stroke="#00ff00" stroke-width="2" shape-rendering="geometricPrecision"/><line x1="1436.8" y1="393" x2="1445.2" y2="365" stroke="#00ff00" stroke-width="2" shape-rendering="geometricPrecision"/><rect x="1445" y="364" width="152" height="2" fill="#00ff00"/><rect x="1445" y="392" width="152" height="2" fill="#00ff00"/><text x="1444" y="386" fill="#ffffff" font-size="20" stroke="#000" stroke-width="0.5">1DBFD7EA</text><line x1="1596.8" y1="365" x2="1605.2" y2="393" stroke="#00ff00" stroke-width="2" shape-rendering="geometricPrecision"/><line x1="1596.8" y1="393" x2="1605.2" y2="365" stroke="#00ff00" stroke-width="2" shape-rendering="geometricPrecision"/><rect x="1605" y="364" width="152" height="2" fill="#00ff00"/><rect x="1605" y="392" width="152" height="2" fill="#00ff00"/><text x="1604" y="386" fill="#ffffff" font-size="20" stroke="#000" stroke-width="0.5">1F627287</text><line x1="1756.8" y1="365" x2="1765.2" y2="393" stroke="#00ff00" stroke-width="2" shape-rendering="geometricPrecision"/><line x1="1756.8" y1="393" x2="1765.2" y2="365" stroke="#00ff00" stroke-width="2" shape-rendering="geometricPrecision"/><rect x="1765" y="364" width="152" height="2" fill="#00ff00"/><rect x="1765" y="392" width="152" height="2" fill="#00ff00"/><text x="1764" y="386" fill="#ffffff" font-size="20" stroke="#000" stroke-width="0.5">0E2BC951</text><line x1="1916.8" y1="365" x2="1925.2" y2="393" stroke="#00ff00" stroke-width="2" shape-rendering="geometricPrecision"/><line x1="1916.8" y1="393" x2="1925.2" y2="365" stroke="#00ff00" stroke-width="2" shape-rendering="geometricPrecision"/><rect x="1925" y="364" width="152" height="2" fill="#00ff00"/><rect x="1925" y="392" width="152" height="2" fill="#00ff00"/><text x="1924" y="386" fill="#ffffff" font-size="20" stroke="#000" stroke-width="0.5">0C47D169</text><line x1="2076.8" y1="365" x2="2085.2" y2="393" stroke="#00ff00" stroke-width="2" shape-rendering="geometricPrecision"/><line x1="2076.8" y1="393" x2="2085.2" y2="365" stroke="#00ff00" stroke-width="2" shape-rendering="geometricPrecision"/><rect x="2085" y="364" width="152" height="2" fill="#00ff00"/><rect x="2085" y="392" width="152" height="2" fill="#00ff00"/><text x="2084" y="386" fill="#ffffff" font-size="20" stroke="#000" stroke-width="0.5">1436FA1E</text><line x1="2236.8" y1="365" x2="2245.2" y2="393" stroke="#00ff00" stroke-width="2" shape-rendering="geometricPrecision"/><line x1="2236.8" y1="393" x2="2245.2" y2="365" stroke="#00ff00" stroke-width="2" shape-rendering="geometricPrecision"/><rect x="2245" y="364" width="152" height="2" fill="#00ff00"/><rect x="2245" y="392" width="152" height="2" fill="#00ff00"/><text x="2244" y="386" fill="#ffffff" font-size="20" stroke="#000" stroke-width="0.5">15E34D50</text><line x1="2396.8" y1="365" x2="2405.2" y2="393" stroke="#00ff00" stroke-width="2" shape-rendering="geometricPrecision"/><line x1="2396.8" y1="393" x2="2405.2" y2="365" stroke="#00ff00" stroke-width="2" shape-rendering="geometricPrecision"/><rect x="2405" y="364" width="152" height="2" fill="#00ff00"/><rect x="2405" y="392" width="152" height="2" fill="#00ff00"/><text x="2404" y="386" fill="#ffffff" font-size="20" stroke="#000" stroke-width="0.5">076E0AF8</text><line x1="2556.8" y1="365" x2="2565.2" y2="393" stroke="#00ff00" stroke-width="2" shape-rendering="geometricPrecision"/><line x1="2556.8" y1="393" x2="2565.2" y2="365" stroke="#00ff00" stroke-width="2" shape-rendering="geometricPrecision"/><rect x="2565" y="364" width="152" height="2" fill="#00ff00"/><rect x="2565" y="392" width="152" height="2" fill="#00ff00"/><text x="2564" y="386" fill="#ffffff" font-size="20" stroke="#000" stroke-width="0.5">0C269B44</text><line x1="2716.8" y1="365" x2="2725.2" y2="393" stroke="#00ff00" stroke-width="2" shape-rendering="geometricPrecision"/><line x1="2716.8" y1="393" x2="2725.2" y2="365" stroke="#00ff00" stroke-width="2" shape-rendering="geometricPrecision"/><rect x="2725" y="364" width="29" height="2" fill="#00ff00"/><rect x="2725" y="392" width="29" height="2" fill="#00ff00"/><text x="2724" y="386" fill="#ffffff" font-size="20" stroke="#000" stroke-width="0.5">26C3A1F0</text><line x1="0.5" y1="405" x2="3" y2="433" stroke="#00ff00" stroke-width="2" shape-rendering="geometricPrecision"/><rect x="3" y="432" width="155" height="2" fill="#00ff00"/><text x="5" y="426" fill="#ffffff" font-size="20" stroke="#000" stroke-width="0.5">00000000</text><line x1="159" y1="433" x2="163" y2="405" stroke="#00ff00" stroke-width="2" shape-rendering="geometricPrecision"/><line x1="161.4" y1="419" x2="163" y2="433" stroke="#00ff00" stroke-width="2" shape-rendering="geometricPrecision"/><rect x="162" y="404" width="155" height="2" fill="#00ff00"/><rect x="162" y="432" width="155" height="2" fill="#00ff00"/><text x="164" y="426" fill="#ffffff" font-size="20" stroke="#000" stroke-width="0.5">0A595E70</text><line x1="316.8" y1="405" x2="325.2" y2="433" stroke="#00ff00" stroke-width="2" shape-rendering="geometricPrecision"/><line x1="316.8" y1="433" x2="325.2" y2="405" stroke="#00ff00" stroke-width="2" shape-rendering="geometricPrecision"/><rect x="325" y="404" width="152" height="2" fill="#00ff00"/><rect x="325" y="432" width="152" height="2" fill="#00ff00"/><text x="324" y="426" fill="#ffffff" font-size="20" stroke="#000" stroke-width="0.5">18D43397</text><line x1="476.8" y1="405" x2="485.2" y2="433" stroke="#00ff00" stroke-width="2" shape-rendering="geometricPrecision"/><line x1="476.8" y1="433" x2="485.2" y2="405" stroke="#00ff00" stroke-width="2" shape-rendering="geometricPrecision"/><rect x="485" y="404" width="152" height="2" fill="#00ff00"/><rect x="485" y="432" width="152" height="2" fill="#00ff00"/><text x="484" y="426" fill="#ffffff" font-size="20" stroke="#000" stroke-width="0.5">114412ED</text><line x1="636.8" y1="405" x2="645.2" y2="433" stroke="#00ff00" stroke-width="2" shape-rendering="geometricPrecision"/><line x1="636.8" y1="433" x2="645.2" y2="405" stroke="#00ff00" stroke-width="2" shape-rendering="geometricPrecision"/><rect x="645" y="404" width="152" height="2" fill="#00ff00"/><rect x="645" y="432" width="152" height="2" fill="#00ff00"/><text x="644" y="426" fill="#ffffff" font-size="20" stroke="#000" stroke-width="0.5">166ABC8A</text><line x1="796.8" y1="405" x2="805.2" y2="433" stroke="#00ff00" stroke-width="2" shape-rendering="geometricPrecision"/><line x1="796.8" y1="433" x2="805.2" y2="405" stroke="#00ff00" stroke-width="2" shape-rendering="geometricPrecision"/><rect x="805" y="404" width="152" height="2" fill="#00ff00"/><rect x="805" y="432" width="152" height="2" fill="#00ff00"/><text x="804" y="426" fill="#ffffff" font-size="20" stroke="#000" stroke-width="0.5">177AA10B</text><line x1="956.8" y1="405" x2="965.2" y2="433" stroke="#00ff00" stroke-width="2" shape-rendering="geometricPrecision"/><line x1="956.8" y1="433" x2="965.2" y2="405" stroke="#00ff00" stroke-width="2" shape-rendering="geometricPrecision"/><rect x="965" y="404" width="152" height="2" fill="#00ff00"/><rect x="965" y="432" width="152" height="2" fill="#00ff00"/><text x="964" y="426" fill="#ffffff" font-size="20" stroke="#000" stroke-width="0.5">1734E6A2</text><line x1="1116.8" y1="405" x2="1125.2" y2="433" stroke="#00ff00" stroke-width="2" shape-rendering="geometricPrecision"/><line x1="1116.8" y1="433" x2="1125.2" y2="405" stroke="#00ff00" stroke-width="2" shape-rendering="geometricPrecision"/><rect x="1125" y="404" width="152" height="2" fill="#00ff00"/><rect x="1125" y="432" width="152" height="2" fill="#00ff00"/><text x="1124" y="426" fill="#ffffff" font-size="20" stroke="#000" stroke-width="0.5">144E374C</text><line x1="1276.8" y1="405" x2="1285.2" y2="433" stroke="#00ff00" stroke-width="2" shape-rendering="geometricPrecision"/><line x1="1276.8" y1="433" x2="1285.2" y2="405" stroke="#00ff00" stroke-width="2" shape-rendering="geometricPrecision"/><rect x="1285" y="404" width="152" height="2" fill="#00ff00"/><rect x="1285" y="432" width="152" height="2" fill="#00ff00"/><text x="1284" y="426" fill="#ffffff" font-size="20" stroke="#000" stroke-width="0.5">146EEC56</text><line x1="1436.8" y1="405" x2="1445.2" y2="433" stroke="#00ff00" stroke-width="2" shape-rendering="geometricPrecision"/><line x1="1436.8" y1="433" x2="1445.2" y2="405" stroke="#00ff00" stroke-width="2" shape-rendering="geometricPrecision"/><rect x="1445" y="404" width="152" height="2" fill="#00ff00"/><rect x="1445" y="432" width="152" height="2" fill="#00ff00"/><text x="1444" y="426" fill="#ffffff" font-size="20" stroke="#000" stroke-width="0.5">1140A612</text><line x1="1596.8" y1="405" x2="1605.2" y2="433" stroke="#00ff00" stroke-width="2" shape-rendering="geometricPrecision"/><line x1="1596.8" y1="433" x2="1605.2" y2="405" stroke="#00ff00" stroke-width="2" shape-rendering="geometricPrecision"/><rect x="1605" y="404" width="152" height="2" fill="#00ff00"/><rect x="1605" y="432" width="152" height="2" fill="#00ff00"/><text x="1604" y="426" fill="#ffffff" font-size="20" stroke="#000" stroke-width="0.5">0FB5FE38</text><line x1="1756.8" y1="405" x2="1765.2" y2="433" stroke="#00ff00" stroke-width="2" shape-rendering="geometricPrecision"/><line x1="1756.8" y1="433" x2="1765.2" y2="405" stroke="#00ff00" stroke-width="2" shape-rendering="geometricPrecision"/><rect x="1765" y="404" width="152" height="2" fill="#00ff00"/><rect x="1765" y="432" width="152" height="2" fill="#00ff00"/><text x="1764" y="426" fill="#ffffff" font-size="20" stroke="#000" stroke-width="0.5">0348AA70</text><line x1="1916.8" y1="405" x2="1925.2" y2="433" stroke="#00ff00" stroke-width="2" shape-rendering="geometricPrecision"/><line x1="1916.8" y1="433" x2="1925.2" y2="405" stroke="#00ff00" stroke-width="2" shape-rendering="geometricPrecision"/><rect x="1925" y="404" width="152" height="2" fill="#00ff00"/><rect x="1925" y="432" width="152" height="2" fill="#00ff00"/><text x="1924" y="426" fill="#ffffff" font-size="20" stroke="#000" stroke-width="0.5">0A2CA698</text><line x1="2076.8" y1="405" x2="2085.2" y2="433" stroke="#00ff00" stroke-width="2" shape-rendering="geometricPrecision"/><line x1="2076.8" y1="433" x2="2085.2" y2="405" stroke="#00ff00" stroke-width="2" shape-rendering="geometricPrecision"/><rect x="2085" y="404" width="152" height="2" fill="#00ff00"/><rect x="2085" y="432" width="152" height="2" fill="#00ff00"/><text x="2084" y="426" fill="#ffffff" font-size="20" stroke="#000" stroke-width="0.5">05259495</text><line x1="2236.8" y1="405" x2="2245.2" y2="433" stroke="#00ff00" stroke-width="2" shape-rendering="geometricPrecision"/><line x1="2236.8" y1="433" x2="2245.2" y2="405" stroke="#00ff00" stroke-width="2" shape-rendering="geometricPrecision"/><rect x="2245" y="404" width="152" height="2" fill="#00ff00"/><rect x="2245" y="432" width="152" height="2" fill="#00ff00"/><text x="2244" y="426" fill="#ffffff" font-size="20" stroke="#000" stroke-width="0.5">03552007</text><line x1="2396.8" y1="405" x2="2405.2" y2="433" stroke="#00ff00" stroke-width="2" shape-rendering="geometricPrecision"/><line x1="2396.8" y1="433" x2="2405.2" y2="405" stroke="#00ff00" stroke-width="2" shape-rendering="geometricPrecision"/><rect x="2405" y="404" width="152" height="2" fill="#00ff00"/><rect x="2405" y="432" width="152" height="2" fill="#00ff00"/><text x="2404" y="426" fill="#ffffff" font-size="20" stroke="#000" stroke-width="0.5">05A2A781</text><line x1="2556.8" y1="405" x2="2565.2" y2="433" stroke="#00ff00" stroke-width="2" shape-rendering="geometricPrecision"/><line x1="2556.8" y1="433" x2="2565.2" y2="405" stroke="#00ff00" stroke-width="2" shape-rendering="geometricPrecision"/><rect x="2565" y="404" width="152" height="2" fill="#00ff00"/><rect x="2565" y="432" width="152" height="2" fill="#00ff00"/><text x="2564" y="426" fill="#ffffff" font-size="20" stroke="#000" stroke-width="0.5">06F58615</text><line x1="2716.8" y1="405" x2="2725.2" y2="433" stroke="#00ff00" stroke-width="2" shape-rendering="geometricPrecision"/><line x1="2716.8" y1="433" x2="2725.2" y2="405" stroke="#00ff00" stroke-width="2" shape-rendering="geometricPrecision"/><rect x="2725" y="404" width="29" height="2" fill="#00ff00"/><rect x="2725" y="432" width="29" height="2" fill="#00ff00"/><text x="2724" y="426" fill="#ffffff" font-size="20" stroke="#000" stroke-width="0.5">105D2E11</text><line x1="0.5" y1="445" x2="3" y2="473" stroke="#00ff00" stroke-width="2" shape-rendering="geometricPrecision"/><rect x="3" y="472" width="155" height="2" fill="#00ff00"/><text x="5" y="466" fill="#ffffff" font-size="20" stroke="#000" stroke-width="0.5">00000000</text><line x1="159" y1="473" x2="163" y2="445" stroke="#00ff00" stroke-width="2" shape-rendering="geometricPrecision"/><line x1="161.4" y1="459" x2="163" y2="473" stroke="#00ff00" stroke-width="2" shape-rendering="geometricPrecision"/><rect x="162" y="444" width="155" height="2" fill="#00ff00"/><rect x="162" y="472" width="155" height="2" fill="#00ff00"/><text x="164" y="466" fill="#ffffff" font-size="20" stroke="#000" stroke-width="0.5">0F982846</text><line x1="316.8" y1="445" x2="325.2" y2="473" stroke="#00ff00" stroke-width="2" shape-rendering="geometricPrecision"/><line x1="316.8" y1="473" x2="325.2" y2="445" stroke="#00ff00" stroke-width="2" shape-rendering="geometricPrecision"/><rect x="325" y="444" width="152" height="2" fill="#00ff00"/><rect x="325" y="472" width="152" height="2" fill="#00ff00"/><text x="324" y="466" fill="#ffffff" font-size="20" stroke="#000" stroke-width="0.5">0BDC7B9D</text><line x1="476.8" y1="445" x2="485.2" y2="473" stroke="#00ff00" stroke-width="2" shape-rendering="geometricPrecision"/><line x1="476.8" y1="473" x2="485.2" y2="445" stroke="#00ff00" stroke-width="2" shape-rendering="geometricPrecision"/><rect x="485" y="444" width="152" height="2" fill="#00ff00"/><rect x="485" y="472" width="152" height="2" fill="#00ff00"/><text x="484" y="466" fill="#ffffff" font-size="20" stroke="#000" stroke-width="0.5">0ABFBD64</text><line x1="636.8" y1="445" x2="645.2" y2="473" stroke="#00ff00" stroke-width="2" shape-rendering="geometricPrecision"/><line x1="636.8" y1="473" x2="645.2" y2="445" stroke="#00ff00" stroke-width="2" shape-rendering="geometricPrecision"/><rect x="645" y="444" width="152" height="2" fill="#00ff00"/><rect x="645" y="472" width="152" height="2" fill="#00ff00"/><text x="644" y="466" fill="#ffffff" font-size="20" stroke="#000" stroke-width="0.5">10BB9153</text><line x1="796.8" y1="445" x2="805.2" y2="473" stroke="#00ff00" stroke-width="2" shape-rendering="geometricPrecision"/><line x1="796.8" y1="473" x2="805.2" y2="445" stroke="#00ff00" stroke-width="2" shape-rendering="geometricPrecision"/><rect x="805" y="444" width="152" height="2" fill="#00ff00"/><rect x="805" y="472" width="152" height="2" fill="#00ff00"/><text x="804" y="466" fill="#ffffff" font-size="20" stroke="#000" stroke-width="0.5">007D1825</text><line x1="956.8" y1="445" x2="965.2" y2="473" stroke="#00ff00" stroke-width="2" shape-rendering="geometricPrecision"/><line x1="956.8" y1="473" x2="965.2" y2="445" stroke="#00ff00" stroke-width="2" shape-rendering="geometricPrecision"/><rect x="965" y="444" width="152" height="2" fill="#00ff00"/><rect x="965" y="472" width="152" height="2" fill="#00ff00"/><text x="964" y="466" fill="#ffffff" font-size="20" stroke="#000" stroke-width="0.5">18A16FAD</text><line x1="1116.8" y1="445" x2="1125.2" y2="473" stroke="#00ff00" stroke-width="2" shape-rendering="geometricPrecision"/><line x1="1116.8" y1="473" x2="1125.2" y2="445" stroke="#00ff00" stroke-width="2" shape-rendering="geometricPrecision"/><rect x="1125" y="444" width="152" height="2" fill="#00ff00"/><rect x="1125" y="472" width="152" height="2" fill="#00ff00"/><text x="1124" y="466" fill="#ffffff" font-size="20" stroke="#000" stroke-width="0.5">04BC88A4</text><line x1="1276.8" y1="445" x2="1285.2" y2="473" stroke="#00ff00" stroke-width="2" shape-rendering="geometricPrecision"/><line x1="1276.8" y1="473" x2="1285.2" y2="445" stroke="#00ff00" stroke-width="2" shape-rendering="geometricPrecision"/><rect x="1285" y="444" width="152" height="2" fill="#00ff00"/><rect x="1285" y="472" width="152" height="2" fill="#00ff00"/><text x="1284" y="466" fill="#ffffff" font-size="20" stroke="#000" stroke-width="0.5">15FCC979</text><line x1="1436.8" y1="445" x2="1445.2" y2="473" stroke="#00ff00" stroke-width="2" shape-rendering="geometricPrecision"/><line x1="1436.8" y1="473" x2="1445.2" y2="445" stroke="#00ff00" stroke-width="2" shape-rendering="geometricPrecision"/><rect x="1445" y="444" width="152" height="2" fill="#00ff00"/><rect x="1445" y="472" width="152" height="2" fill="#00ff00"/><text x="1444" y="466" fill="#ffffff" font-size="20" stroke="#000" stroke-width="0.5">0C7F31D8</text><line x1="1596.8" y1="445" x2="1605.2" y2="473" stroke="#00ff00" stroke-width="2" shape-rendering="geometricPrecision"/><line x1="1596.8" y1="473" x2="1605.2" y2="445" stroke="#00ff00" stroke-width="2" shape-rendering="geometricPrecision"/><rect x="1605" y="444" width="152" height="2" fill="#00ff00"/><rect x="1605" y="472" width="152" height="2" fill="#00ff00"/><text x="1604" y="466" fill="#ffffff" font-size="20" stroke="#000" stroke-width="0.5">0FAC744F</text><line x1="1756.8" y1="445" x2="1765.2" y2="473" stroke="#00ff00" stroke-width="2" shape-rendering="geometricPrecision"/><line x1="1756.8" y1="473" x2="1765.2" y2="445" stroke="#00ff00" stroke-width="2" shape-rendering="geometricPrecision"/><rect x="1765" y="444" width="152" height="2" fill="#00ff00"/><rect x="1765" y="472" width="152" height="2" fill="#00ff00"/><text x="1764" y="466" fill="#ffffff" font-size="20" stroke="#000" stroke-width="0.5">0AE31EE1</text><line x1="1916.8" y1="445" x2="1925.2" y2="473" stroke="#00ff00" stroke-width="2" shape-rendering="geometricPrecision"/><line x1="1916.8" y1="473" x2="1925.2" y2="445" stroke="#00ff00" stroke-width="2" shape-rendering="geometricPrecision"/><rect x="1925" y="444" width="152" height="2" fill="#00ff00"/><rect x="1925" y="472" width="152" height="2" fill="#00ff00"/><text x="1924" y="466" fill="#ffffff" font-size="20" stroke="#000" stroke-width="0.5">021B2AD1</text><line x1="2076.8" y1="445" x2="2085.2" y2="473" stroke="#00ff00" stroke-width="2" shape-rendering="geometricPrecision"/><line x1="2076.8" y1="473" x2="2085.2" y2="445" stroke="#00ff00" stroke-width="2" shape-rendering="geometricPrecision"/><rect x="2085" y="444" width="152" height="2" fill="#00ff00"/><rect x="2085" y="472" width="152" height="2" fill="#00ff00"/><text x="2084" y="466" fill="#ffffff" font-size="20" stroke="#000" stroke-width="0.5">0F116589</text><line x1="2236.8" y1="445" x2="2245.2" y2="473" stroke="#00ff00" stroke-width="2" shape-rendering="geometricPrecision"/><line x1="2236.8" y1="473" x2="2245.2" y2="445" stroke="#00ff00" stroke-width="2" shape-rendering="geometricPrecision"/><rect x="2245" y="444" width="152" height="2" fill="#00ff00"/><rect x="2245" y="472" width="152" height="2" fill="#00ff00"/><text x="2244" y="466" fill="#ffffff" font-size="20" stroke="#000" stroke-width="0.5">128E2D49</text><line x1="2396.8" y1="445" x2="2405.2" y2="473" stroke="#00ff00" stroke-width="2" shape-rendering="geometricPrecision"/><line x1="2396.8" y1="473" x2="2405.2" y2="445" stroke="#00ff00" stroke-width="2" shape-rendering="geometricPrecision"/><rect x="2405" y="444" width="152" height="2" fill="#00ff00"/><rect x="2405" y="472" width="152" height="2" fill="#00ff00"/><text x="2404" y="466" fill="#ffffff" font-size="20" stroke="#000" stroke-width="0.5">01CB6377</text><line x1="2556.8" y1="445" x2="2565.2" y2="473" stroke="#00ff00" stroke-width="2" shape-rendering="geometricPrecision"/><line x1="2556.8" y1="473" x2="2565.2" y2="445" stroke="#00ff00" stroke-width="2" shape-rendering="geometricPrecision"/><rect x="2565" y="444" width="152" height="2" fill="#00ff00"/><rect x="2565" y="472" width="152" height="2" fill="#00ff00"/><text x="2564" y="466" fill="#ffffff" font-size="20" stroke="#000" stroke-width="0.5">0531152F</text><line x1="2716.8" y1="445" x2="2725.2" y2="473" stroke="#00ff00" stroke-width="2" shape-rendering="geometricPrecision"/><line x1="2716.8" y1="473" x2="2725.2" y2="445" stroke="#00ff00" stroke-width="2" shape-rendering="geometricPrecision"/><rect x="2725" y="444" width="29" height="2" fill="#00ff00"/><rect x="2725" y="472" width="29" height="2" fill="#00ff00"/><text x="2724" y="466" fill="#ffffff" font-size="20" stroke="#000" stroke-width="0.5">167B0C3A</text></g></svg>
</body></html>
